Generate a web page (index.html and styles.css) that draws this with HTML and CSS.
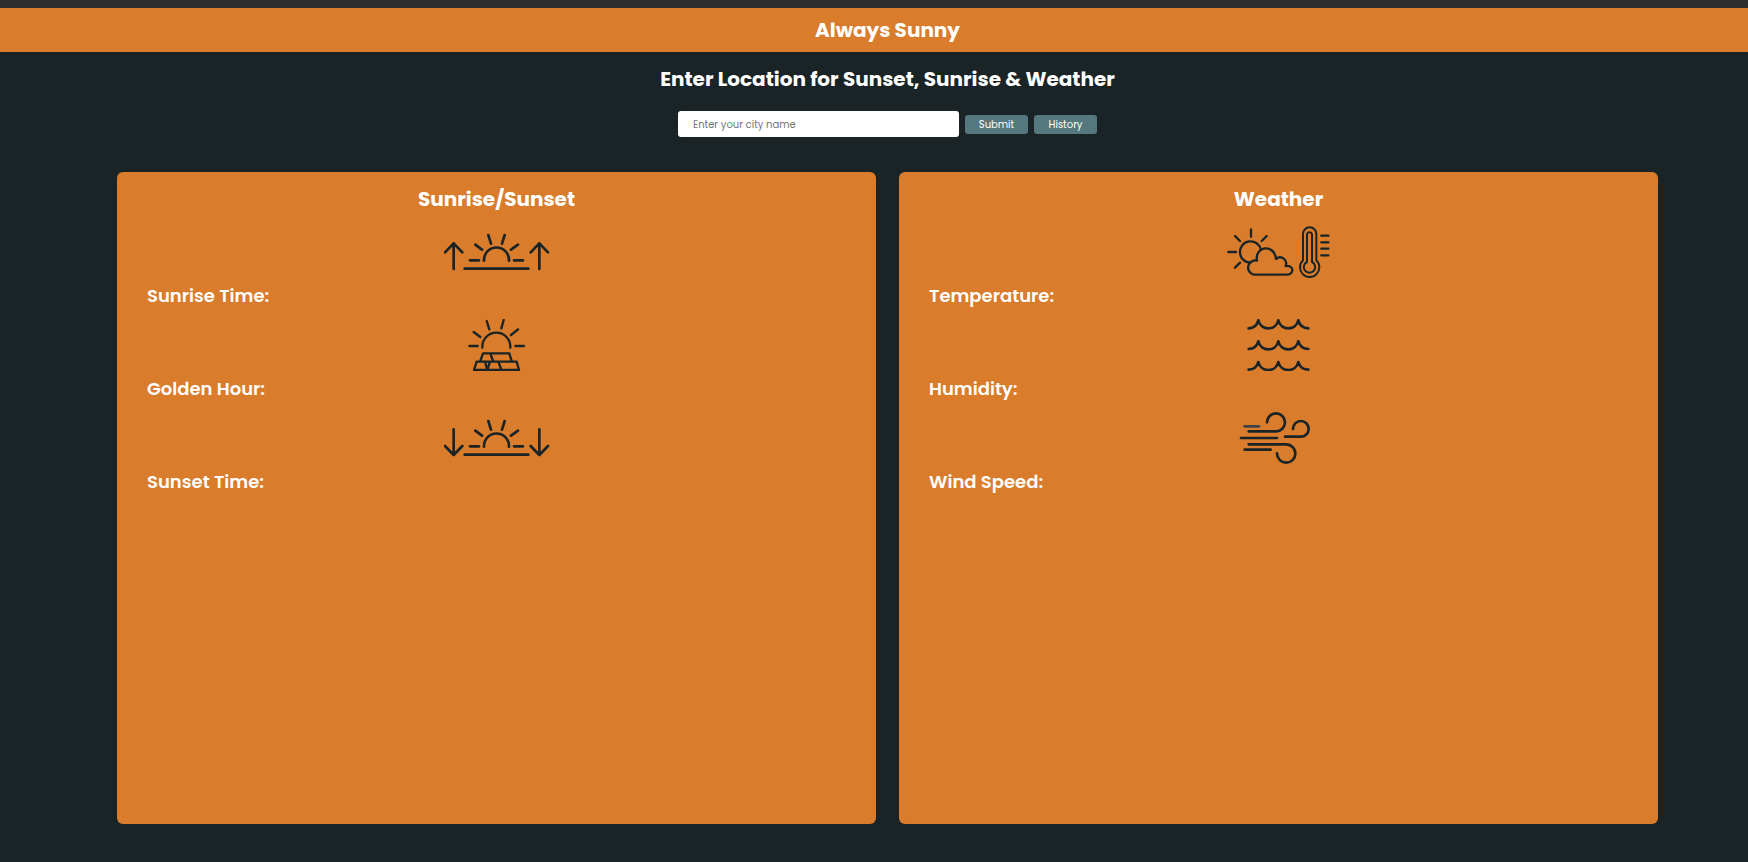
FILE: index.html
```html
<!DOCTYPE html>
<html lang="en">
<head>
<meta charset="utf-8">
<meta name="viewport" content="width=device-width, initial-scale=1">
<title>Always Sunny</title>
<link rel="stylesheet" href="styles.css">
</head>
<body>
<header class="banner"><h1 class="heading">Always Sunny</h1></header>
<main class="page">
  <h2 class="heading">Enter Location for Sunset, Sunrise &amp; Weather</h2>
  <form class="search">
    <input class="city" type="text" placeholder="Enter your city name" aria-label="City name">
    <button class="btn" type="button">Submit</button>
    <button class="btn" type="button">History</button>
  </form>
  <div class="cards">
    <section class="card">
      <h2 class="heading">Sunrise/Sunset</h2>
      <div class="item">
        <svg class="icon" viewBox="42 18 318 156" aria-hidden="true">
          <path d="M71 147V70M45 97L71 70L97 97M328 147V70M302 97L328 70L354 97"/>
          <path d="M104 146H295M120 121H147M252 121H279M162 122V120A37.500 37.500 0 0 1 237 120V122M136 74L156 89M175 45L183 71M224 45L216 71M264 74L243 89"/>
        </svg>
        <h3 class="label">Sunrise Time:</h3>
      </div>
      <div class="item">
        <svg class="icon thin" viewBox="42 27 318 156" aria-hidden="true">
          <path d="M118 108H143M256 108H282M157 113V110A42 42 0 0 1 241 110V113M131 66L151 81M170 33L178 58M221 30L214 55M264 58L243 75"/>
          <path d="M151 153L159 130H238L245 153M181 130L189 153M132 180L140 155H260L267 180ZM165 155L172 180L180 155M205 155L214 180"/>
        </svg>
        <h3 class="label">Golden Hour:</h3>
      </div>
      <div class="item">
        <svg class="icon" viewBox="42 21 318 156" aria-hidden="true">
          <path d="M71 73V150M45 123L71 150L97 123M328 73V150M302 123L328 150L354 123"/>
          <path d="M104 149H295M120 124H147M252 124H279M162 125V123A37.500 37.500 0 0 1 237 123V125M136 77L156 92M175 48L183 74M224 48L216 74M264 77L243 92"/>
        </svg>
        <h3 class="label">Sunset Time:</h3>
      </div>
    </section>
    <section class="card">
      <h2 class="heading">Weather</h2>
      <div class="item">
        <svg class="icon thin" viewBox="34 33 318 156" aria-hidden="true">
          <path d="M109 43V65M61 63L76 78M156 63L141 78M41 111H64M61 158L76 143M107 143A32 32 0 1 1 139 104"/>
          <path d="M117 179A21 21 0 1 1 127 137C119 94 179 84 184 132C200 118 220 136 213 153C240 149 238 180 217 179Z"/>
          <path class="fine" d="M265 136V57A20 20 0 0 1 305 57V136A29 29 0 1 1 265 136ZM277 141V57A8 8 0 0 1 292 57V141A17 17 0 1 1 277 141Z"/>
          <path d="M320 62H341M320 82H341M320 101H341M320 121H341"/>
        </svg>
        <h3 class="label">Temperature:</h3>
      </div>
      <div class="item">
        <svg class="icon" viewBox="33 27 318 156" aria-hidden="true">
          <path d="M101 55Q124 54 130 31C137 63 183 63 190 31C197 63 243 63 250 31Q256 54 280 55"/>
          <path d="M101 117Q124 116 130 94C137 126 183 126 190 94C197 126 243 126 250 94Q256 116 280 117"/>
          <path d="M101 179Q124 178 130 156C137 188 183 188 190 156C197 188 243 188 250 156Q256 178 280 179"/>
        </svg>
        <h3 class="label">Humidity:</h3>
      </div>
      <div class="item">
        <svg class="icon" viewBox="33 36 318 156" aria-hidden="true">
          <path class="pale" d="M89 79H132"/>
          <path d="M101 94H183A27 27 0 1 0 156 67M78 114H186M210 110H257A23.500 23.500 0 1 0 234 87M101 133H214A27.500 27.500 0 1 1 186 160M89 149H167"/>
        </svg>
        <h3 class="label">Wind Speed:</h3>
      </div>
    </section>
  </div>
</main>
</body>
</html>
```
FILE: styles.css
```css
* {
  box-sizing: border-box;
}

body {
  margin: 0;
  min-height: 100vh;
  display: flex;
  flex-direction: column;
  border-top: 8px solid #2d2d2d;
  background: #1a2426;
  color: #fff;
  font-family: Poppins, Inter, "Open Sans", sans-serif;
}

h1,
h2,
h3 {
  margin: 0;
}

.banner {
  padding: 7px 0 7px 27px;
  background: #d97c2b;
}

.heading {
  font-size: 20px;
  line-height: 30px;
  font-weight: 700;
  text-align: center;
}

.page {
  flex: 1;
  display: flex;
  flex-direction: column;
  padding: 12px 90px 38px 117px;
}

.search {
  display: flex;
  justify-content: center;
  align-items: center;
  gap: 6px;
  margin: 17px 0 35px;
}

.city {
  width: 281px;
  height: 26px;
  padding: 2px 15px 0;
  border: 0;
  border-radius: 3px;
  background: #fff;
  font: 400 10px/16px Poppins, Inter, sans-serif;
}

.city::placeholder {
  color: #757575;
}

.btn {
  width: 63px;
  height: 19px;
  padding: 0;
  border: 0;
  border-radius: 3px;
  background: #54787e;
  color: #fff;
  font: 400 10px/19px Poppins, Inter, sans-serif;
}

.cards {
  flex: 1;
  display: grid;
  grid-template-columns: 1fr 1fr;
  gap: 23px;
}

.card {
  display: flex;
  flex-direction: column;
  padding: 12px 30px;
  border-radius: 6px;
  background: #d97c2b;
}

.card .heading {
  margin-bottom: 12px;
}

.item {
  margin-bottom: 10px;
}

.icon {
  display: block;
  width: 106px;
  height: 52px;
  margin: 0 auto 4px;
  fill: none;
  stroke: #1a2426;
  stroke-width: 8;
  stroke-linecap: round;
  stroke-linejoin: round;
}

.thin {
  stroke-width: 7;
}

.fine {
  stroke-width: 6;
}

.pale {
  stroke: #40424a;
}

.label {
  font-size: 18px;
  line-height: 27px;
  font-weight: 600;
}
```
